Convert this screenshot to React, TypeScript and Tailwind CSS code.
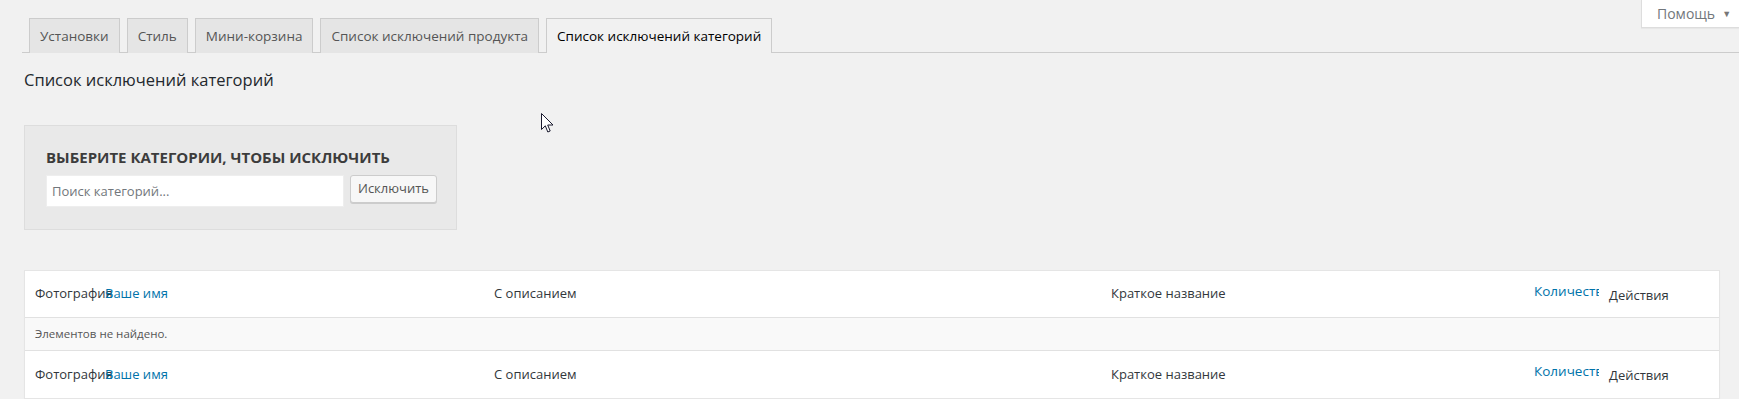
import React from 'react'

const tabs = [
    { name: 'Установки', active: false },
    { name: 'Стиль', active: false },
    { name: 'Мини-корзина', active: false },
    { name: 'Список исключений продукта', active: false },
    { name: 'Список исключений категорий', active: true },
]

const cols = 'grid grid-cols-[70px_389px_617px_423px_75px_1fr]'

function HeaderRow({ bordered }: { bordered?: boolean }) {
    return (
        <div className={`${cols} h-[47px] text-[13px] text-[#32373c] ${bordered ? 'border-b border-[#e1e1e1]' : ''}`}>
            <div className="flex items-center pl-[10px] whitespace-nowrap overflow-visible">Фотография</div>
            <div className="flex items-center pl-[10px] text-[#0073aa]">Ваше имя</div>
            <div className="flex items-center pl-[10px]">С описанием</div>
            <div className="flex items-center pl-[10px]">Краткое название</div>
            <div className="pl-[10px] pt-[10px] leading-[20px]">
                <span className="block w-[65px] overflow-hidden whitespace-nowrap text-[13.5px] text-[#0073aa]">Количество</span>
            </div>
            <div className="flex items-center pl-[10px] pt-[3px]">Действия</div>
        </div>
    )
}

export default function App() {
    return (
        <div className="relative h-[399px] overflow-hidden bg-[#f1f1f1] font-['Open_Sans',sans-serif] text-[#23282d]">
            {/* help tab */}
            <button className="absolute top-0 left-[1641px] right-0 flex h-[28px] items-center gap-[7px] border border-t-0 border-r-0 border-[#ddd] bg-white pl-[15px] text-[14px] text-[#72777c] shadow-[0_1px_1px_rgba(0,0,0,0.04)]">
                Помощь
                <span className="text-[9px] text-[#777]">▼</span>
            </button>

            <div className="pl-[22px] pt-[18px]">
                <nav className="flex border-b border-[#ccc] pl-[7px]">
                    {tabs.map((tab, i) => (
                        <a
                            key={i}
                            href="#"
                            className={
                                'mr-[7px] -mb-px border border-b-0 border-[#ccc] px-[10px] py-[5px] text-[13.5px] leading-[24px] ' +
                                (tab.active
                                    ? 'border-b border-b-[#f1f1f1] bg-[#f1f1f1] text-black'
                                    : 'bg-[#e5e5e5] text-[#555]')
                            }>
                            {tab.name}
                        </a>
                    ))}
                </nav>

                <h2 className="mt-[15px] pl-[2px] text-[16.5px] leading-[24px] text-[#23282d]">Список исключений категорий</h2>

                <div className="mt-[33px] ml-[2px] w-[433px] border border-[#ddd] bg-[#e9e9e9] pt-[22px] pb-[22px] pl-[21px]">
                    <h3 className="text-[15px] font-bold uppercase leading-[18px] text-[#3c3c3c]">
                        Выберите категории, чтобы исключить
                    </h3>
                    <div className="mt-[9px] flex items-start gap-[6px]">
                        <input
                            placeholder="Поиск категорий..."
                            className="h-[32px] w-[298px] border border-[#eee] bg-white px-[5px] text-[13px] placeholder:text-[#72777c]"
                        />
                        <button className="h-[28px] w-[87px] rounded-[3px] border border-[#ccc] bg-[#f7f7f7] text-[13px] text-[#555] shadow-[0_1px_0_#ccc]">
                            Исключить
                        </button>
                    </div>
                </div>

                <div className="mt-[40px] mr-[19px] ml-[2px] border border-[#e5e5e5] bg-white shadow-[0_1px_1px_rgba(0,0,0,0.04)]">
                    <HeaderRow bordered />
                    <div className="flex h-[33px] items-center border-b border-[#e1e1e1] bg-[#f9f9f9] pl-[10px] text-[11.5px] text-[#555]">
                        Элементов не найдено.
                    </div>
                    <HeaderRow />
                </div>
            </div>

            {/* mouse cursor */}
            <svg className="absolute left-[541px] top-[113px]" width="13" height="21" viewBox="0 0 13 21">
                <path d="M0.5 0.5 L0.5 16.5 L4.3 12.8 L6.8 19 L9.2 18 L6.7 12 L12 12 Z" fill="white" stroke="#1a1a2e" strokeWidth="1" strokeLinejoin="round" />
            </svg>
        </div>
    )
}
